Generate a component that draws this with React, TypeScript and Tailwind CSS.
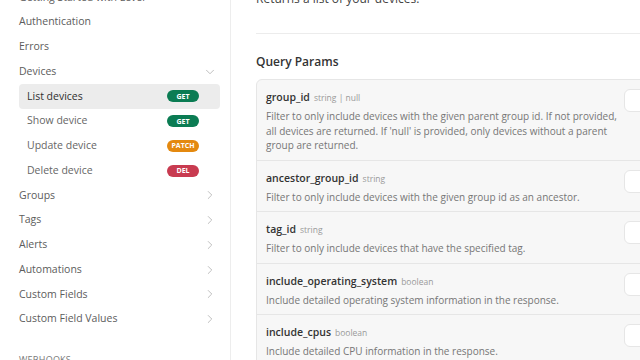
import { ChevronDown, ChevronRight } from "lucide-react";

type Method = "GET" | "PATCH" | "DEL";

const sections = ["Groups", "Tags", "Alerts", "Automations", "Custom Fields", "Custom Field Values"];

const endpoints: { name: string; method: Method; active?: boolean }[] = [
  { name: "List devices", method: "GET", active: true },
  { name: "Show device", method: "GET" },
  { name: "Update device", method: "PATCH" },
  { name: "Delete device", method: "DEL" },
];

const params = [
  {
    name: "group_id",
    type: "string | null",
    desc: "Filter to only include devices with the given parent group id. If not provided, all devices are returned. If 'null' is provided, only devices without a parent group are returned.",
  },
  {
    name: "ancestor_group_id",
    type: "string",
    desc: "Filter to only include devices with the given group id as an ancestor.",
  },
  { name: "tag_id", type: "string", desc: "Filter to only include devices that have the specified tag." },
  {
    name: "include_operating_system",
    type: "boolean",
    desc: "Include detailed operating system information in the response.",
  },
  { name: "include_cpus", type: "boolean", desc: "Include detailed CPU information in the response." },
];

const badgeColor: Record<Method, string> = {
  GET: "bg-[#0b7c53]",
  PATCH: "bg-[#e4890f]",
  DEL: "bg-[#c83b50]",
};

const MethodBadge = ({ method }: { method: Method }) => (
  <span
    className={`${badgeColor[method]} flex h-[12px] w-[32px] items-center justify-center rounded-full text-[7px] font-bold leading-none text-white`}
  >
    {method}
  </span>
);

const NavItem = ({ label, open }: { label: string; open?: boolean }) => (
  <div className="flex h-[24.75px] items-center justify-between pr-[3px] text-[10.5px] text-[#5c5c5c]">
    <span>{label}</span>
    {open !== undefined &&
      (open ? (
        <ChevronDown size={14} strokeWidth={1.4} className="text-[#b0b0b0]" />
      ) : (
        <ChevronRight size={14} strokeWidth={1.4} className="text-[#b0b0b0]" />
      ))}
  </div>
);

const Sidebar = () => (
  <aside className="w-[231px] shrink-0 border-r border-[#ededed] pl-[19px] pr-[10px]">
    <div className="-mt-[15px]">
      <NavItem label="Getting Started with Level" />
      <NavItem label="Authentication" />
      <NavItem label="Errors" />
      <NavItem label="Devices" open />
      <div>
        {endpoints.map((e) => (
          <div
            key={e.name}
            className={`flex h-[24.75px] items-center justify-between rounded pl-[8px] pr-[21px] text-[10.5px] ${
              e.active ? "bg-[#ececec] text-[#2f2f2f]" : "text-[#666]"
            }`}
          >
            <span>{e.name}</span>
            <MethodBadge method={e.method} />
          </div>
        ))}
      </div>
      {sections.map((s) => (
        <NavItem key={s} label={s} open={false} />
      ))}
      <div className="mt-[22px] text-[9px] leading-[12px] tracking-wide text-[#777]">WEBHOOKS</div>
    </div>
  </aside>
);

const ParamRow = ({ name, type, desc, last }: { name: string; type: string; desc: string; last?: boolean }) => (
  <div className={`flex pl-[9px] pr-[9px] pt-[10px] pb-[7px] ${last ? "" : "border-b border-[#e6e6e6]"}`}>
    <div className="w-[352px] shrink-0">
      <div className="flex h-[15px] items-baseline gap-[4px]">
        <span className="text-[10.5px] font-semibold text-[#333]">{name}</span>
        <span className="text-[8.5px] text-[#9a9a9a]">{type}</span>
      </div>
      <p className="mt-[4px] text-[10px] leading-[14.5px] text-[#767676]">{desc}</p>
    </div>
    <div className="ml-[6px] -mt-[1px] h-[23px] w-[60px] shrink-0 rounded-md border border-[#e6e6e6] bg-white" />
  </div>
);

export default function App() {
  return (
    <div className="flex h-[360px] w-[640px] overflow-hidden bg-white font-['Open_Sans',sans-serif]">
      <Sidebar />
      <main className="min-w-0 flex-1 overflow-hidden pl-[25px]">
        <div className="-mt-[10px] h-[18px] text-[12px] leading-[18px] text-[#444]">
          Returns a list of your devices.
        </div>
        <div className="mt-[25px] h-px w-[500px] bg-[#ececec]" />
        <h2 className="mt-[20px] h-[16px] text-[12px] font-semibold leading-[16px] text-[#333]">Query Params</h2>
        <div className="mt-[9px] w-[440px] rounded-md border border-[#e6e6e6] bg-[#f7f7f7]">
          {params.map((p, i) => (
            <ParamRow key={p.name} {...p} last={i === params.length - 1} />
          ))}
        </div>
      </main>
    </div>
  );
}
